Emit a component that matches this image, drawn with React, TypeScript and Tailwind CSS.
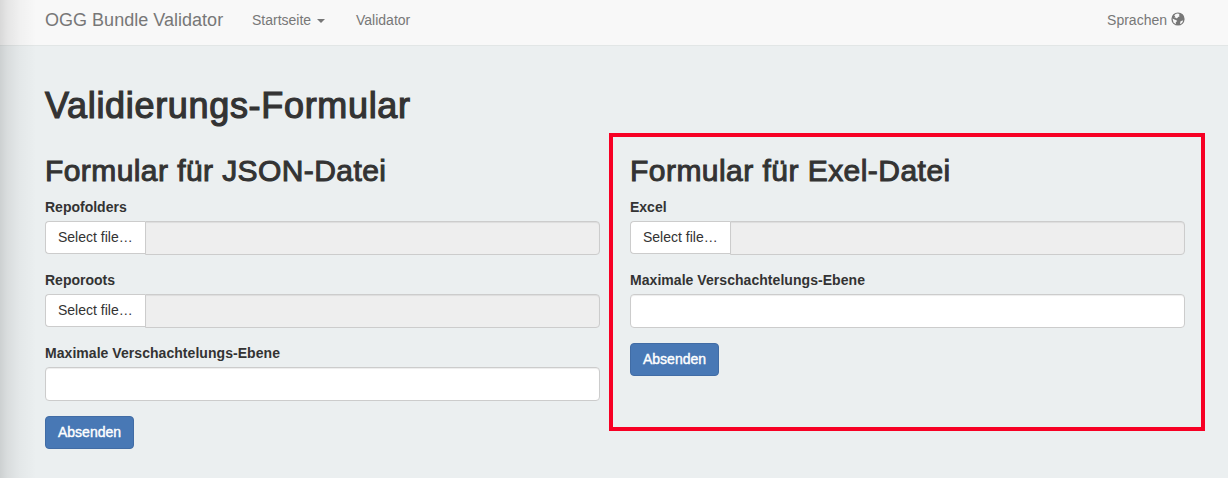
import React from "react";

function Label({ children, className }: { children: React.ReactNode; className: string }) {
  return (
    <label className={`mb-[5px] block h-[19px] whitespace-nowrap font-bold leading-5 ${className}`}>
      {children}
    </label>
  );
}

function FileField({ label, className }: { label: string; className: string }) {
  return (
    <div className="mb-[15px]">
      <Label className={className}>{label}</Label>
      <div className="flex h-[34px] items-start">
        <button className="h-[33px] w-[100px] shrink-0 whitespace-nowrap rounded-l border border-r-0 border-[#ccc] bg-white pl-3 text-left leading-[31px]">
          Select file…
        </button>
        <div className="h-[34px] flex-1 rounded-r border border-[#ccc] bg-[#eee] shadow-[inset_0_1px_1px_rgba(0,0,0,0.075)]" />
      </div>
    </div>
  );
}

function LevelField() {
  return (
    <div className="mb-[15px]">
      <Label className="tracking-[0.05px]">Maximale Verschachtelungs-Ebene</Label>
      <input className="block h-[34px] w-full rounded border border-[#ccc] bg-white px-3 shadow-[inset_0_1px_1px_rgba(0,0,0,0.075)] outline-none" />
    </div>
  );
}

function Submit() {
  return (
    <button className="block h-[33px] w-[89px] rounded border border-[#416ca5] bg-[#4878b5] leading-[31px] text-white [-webkit-text-stroke:0.4px_white]">
      Absenden
    </button>
  );
}

function Globe() {
  return (
    <svg viewBox="0 0 14 14" className="-mt-0.5 h-3.5 w-3.5" fill="#777">
      <circle cx="7" cy="7" r="6.6" />
      <g fill="#f8f8f8">
        <path d="M4.6 2 6.4 1.5 8.6 1.9 8 3 8.6 4.2 7.2 5 5.9 6.5 4.4 5.6 3.4 6.1 4.2 4.6 3.2 3.6Z" />
        <path d="M1.5 6.6 3.4 7.4 5.6 8.2 5.9 9.3 4.7 10.5 4.9 12.2 2.5 10.4Z" />
        <path d="M9.4 9.6 11.3 8.5 12.2 8.8 11 11 9 12.3Z" />
      </g>
    </svg>
  );
}

export default function App() {
  return (
    <div className="relative h-[478px] w-[1228px] overflow-hidden bg-[#ebeff0] font-['Liberation_Sans',Arial,sans-serif] text-sm text-[#333]">
      <nav className="flex h-[46px] items-start border-b border-[#e2e6e6] bg-[#f8f8f8] pl-[45px] pr-[43px] leading-5 text-[#777]">
        <a className="w-[207px] shrink-0 whitespace-nowrap pt-2.5 text-lg leading-5 tracking-[0.02px]">OGG Bundle Validator</a>
        <a className="flex w-[104px] shrink-0 items-center pt-2.5">
          Startseite
          <svg viewBox="0 0 8 4" className="ml-[6px] mt-px h-1 w-2" fill="#777">
            <path d="M0 0H8L4 4Z" />
          </svg>
        </a>
        <a className="pt-2.5">Validator</a>
        <a className="ml-auto flex items-center gap-1 pt-2.5">
          Sprachen <Globe />
        </a>
      </nav>
      <main className="px-[45px] pt-10">
        <h1 className="h-[67px] whitespace-nowrap text-4xl leading-10 tracking-[0.68px] [-webkit-text-stroke:1.2px_#333]">
          Validierungs-Formular
        </h1>
        <div className="flex">
          <section className="w-[555px] shrink-0">
            <h2 className="h-11 whitespace-nowrap text-[30px] leading-[35px] tracking-[0.42px] [-webkit-text-stroke:1px_#333]">
              Formular für JSON-Datei
            </h2>
            <FileField label="Repofolders" className="" />
            <FileField label="Reporoots" className="" />
            <LevelField />
            <Submit />
          </section>
          <section className="-mt-5 ml-[9px] h-[298px] w-[596px] shrink-0 border-4 border-[#f70024] px-[17px] pr-4 pt-4">
            <h2 className="h-11 whitespace-nowrap text-[30px] leading-[35px] tracking-[0.46px] [-webkit-text-stroke:1px_#333]">
              Formular für Exel-Datei
            </h2>
            <FileField label="Excel" className="" />
            <LevelField />
            <Submit />
          </section>
        </div>
      </main>
      <div className="pointer-events-none absolute inset-y-0 left-0 w-9 bg-[linear-gradient(to_right,rgba(0,0,0,0.13),rgba(0,0,0,0.08)_20%,rgba(0,0,0,0.03)_55%,transparent)]" />
    </div>
  );
}
